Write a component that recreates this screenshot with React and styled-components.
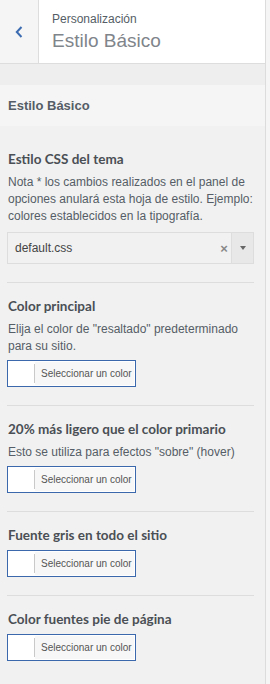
import React from "react";
import styled, { createGlobalStyle } from "styled-components";

const Global = createGlobalStyle`
  html, body { margin: 0; padding: 0; background: #f5f5f5; }
  body { font-family: "Liberation Sans", Arial, sans-serif; }
  * { box-sizing: border-box; }
`;

const Panel = styled.div`
  width: 266px;
  height: 684px;
  background: #f1f1f1;
  border-right: 1px solid #dcdcdc;
  display: flex;
  flex-direction: column;
  overflow: hidden;
  & > * { flex-shrink: 0; }
`;

const Header = styled.div`
  display: flex;
  height: 64px;
  background: #fff;
  border-bottom: 1px solid #dddddd;
`;

const BackButton = styled.button`
  width: 39px;
  border: 0;
  border-right: 1px solid #dddddd;
  background: #f5f5f5;
  display: flex;
  align-items: center;
  justify-content: center;
  padding: 0;
  color: #3b6bb1;
`;

const HeaderText = styled.div`
  display: flex;
  flex-direction: column;
  padding: 11px 0 0 13px;
`;

const Crumb = styled.span`
  font-size: 12px;
  color: #555d66;
  line-height: 16px;
`;

const Title = styled.span`
  font-size: 19px;
  font-weight: 300;
  color: #80858b;
  line-height: 28px;
  margin-top: 0;
`;

const Spacer = styled.div`
  height: 21px;
  background: #eeeeee;
`;

const SectionHead = styled.div`
  height: 41px;
  background: #f5f5f5;
  display: flex;
  align-items: center;
  padding: 0 8px;
  font-size: 13px;
  font-weight: 600;
  color: #555d66;
`;

const Content = styled.div`
  padding: 24px 11px 0 7px;
  display: flex;
  flex-direction: column;
`;

const Control = styled.div`
  padding: 0 0 18px;
  border-bottom: ${(p) => (p.$last ? "0" : "1px solid #dddddd")};
  margin-bottom: 14px;
  display: flex;
  flex-direction: column;
`;

const ControlTitle = styled.div`
  font-family: Lato, "Liberation Sans", Arial, sans-serif;
  font-size: 13.5px;
  font-weight: 700;
  color: #4a4f55;
  line-height: 18px;
  margin: 0 0 6px 1px;
`;

const Desc = styled.div`
  font-size: 12px;
  color: #555d66;
  line-height: 17px;
  margin: 0 0 5px 1px;
`;

const Select = styled.div`
  height: 32px;
  margin-top: 2px;
  border: 1px solid #dddddd;
  background: #f1f1f1;
  display: flex;
  align-items: stretch;
`;

const SelectValue = styled.div`
  flex: 1;
  display: flex;
  align-items: center;
  padding-left: 7px;
  font-size: 12px;
  color: #444;
`;

const Clear = styled.div`
  width: 10px;
  margin-right: 2px;
  display: flex;
  align-items: center;
  justify-content: center;
  font-size: 13px;
  color: #888;
  font-weight: 700;
`;

const Arrow = styled.div`
  width: 22px;
  border-left: 1px solid #dddddd;
  background: #e8e8e8;
  display: flex;
  align-items: center;
  justify-content: center;
  &::after {
    content: "";
    border-left: 3.5px solid transparent;
    border-right: 3.5px solid transparent;
    border-top: 4px solid #666;
  }
`;

const ColorButton = styled.button`
  width: 129px;
  height: 27px;
  padding: 0;
  border: 1.5px solid #3b67ad;
  background: #fff;
  display: flex;
  align-items: stretch;
  cursor: pointer;
`;

const Swatch = styled.span`
  width: 27px;
  background: #fff;
  border-right: 1px solid #c9c9c9;
  margin: 3px 0;
`;

const ColorLabel = styled.span`
  flex: 1;
  background: #f7f7f7;
  font-family: "Liberation Sans", Arial, sans-serif;
  font-size: 10px;
  white-space: nowrap;
  color: #555;
  display: flex;
  align-items: center;
  padding-left: 6px;
  margin: 1px 1px 1px 0;
`;

const ColorPicker = () => (
  <ColorButton>
    <Swatch />
    <ColorLabel>Seleccionar un color</ColorLabel>
  </ColorButton>
);

export default function App() {
  return (
    <>
      <Global />
      <Panel>
        <Header>
          <BackButton aria-label="Volver">
            <svg width="8" height="12" viewBox="0 0 8 12">
              <path d="M6.5 1 L1.8 6 L6.5 11" fill="none" stroke="currentColor" strokeWidth="2" />
            </svg>
          </BackButton>
          <HeaderText>
            <Crumb>Personalización</Crumb>
            <Title>Estilo Básico</Title>
          </HeaderText>
        </Header>
        <Spacer />
        <SectionHead>Estilo Básico</SectionHead>
        <Content>
          <Control>
            <ControlTitle>Estilo CSS del tema</ControlTitle>
            <Desc>
              Nota * los cambios realizados en el panel de opciones anulará esta hoja de estilo. Ejemplo:
              colores establecidos en la tipografía.
            </Desc>
            <Select>
              <SelectValue>default.css</SelectValue>
              <Clear>×</Clear>
              <Arrow />
            </Select>
          </Control>
          <Control>
            <ControlTitle>Color principal</ControlTitle>
            <Desc>Elija el color de "resaltado" predeterminado para su sitio.</Desc>
            <ColorPicker />
          </Control>
          <Control>
            <ControlTitle>20% más ligero que el color primario</ControlTitle>
            <Desc>Esto se utiliza para efectos "sobre" (hover)</Desc>
            <ColorPicker />
          </Control>
          <Control>
            <ControlTitle>Fuente gris en todo el sitio</ControlTitle>
            <ColorPicker />
          </Control>
          <Control $last>
            <ControlTitle>Color fuentes pie de página</ControlTitle>
            <ColorPicker />
          </Control>
        </Content>
      </Panel>
    </>
  );
}
